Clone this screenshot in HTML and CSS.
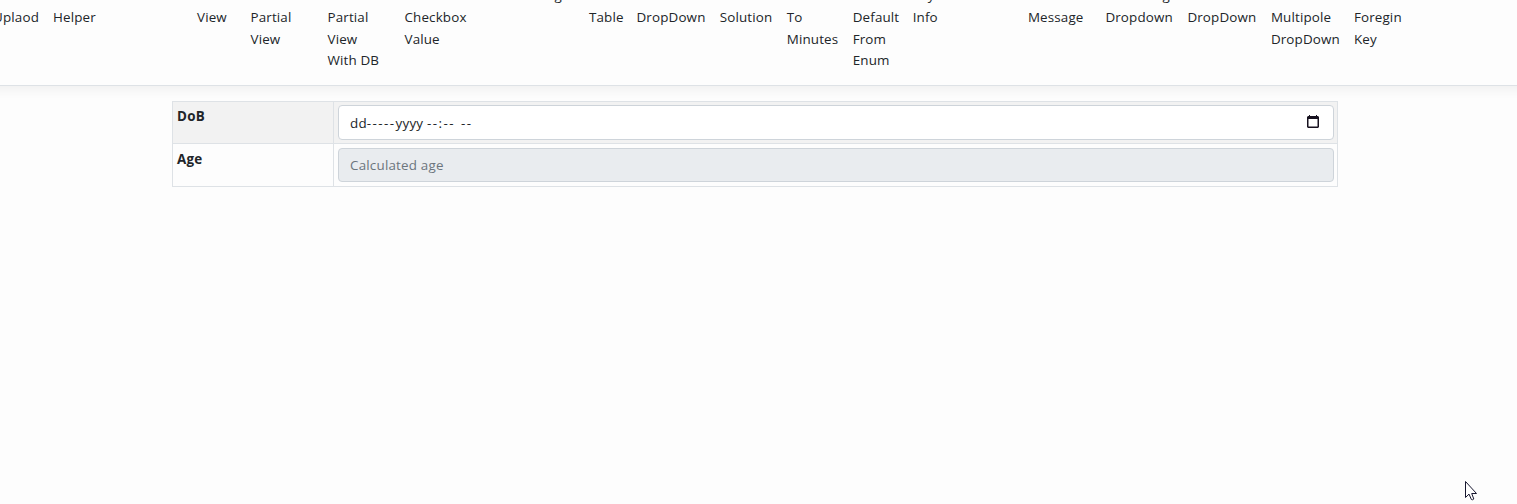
FILE: index.html
```
<!DOCTYPE html>
<html lang="en">
<head>
<meta charset="utf-8">
<title>Age calculator</title>
<link rel="stylesheet" href="styles.css">
</head>
<body>
<header class="navbar">
<nav class="nav-list">
<a class="nav-item nav-clipped"><br><span>Uplaod</span></a>
<a class="nav-item"><br>Helper</a>
<a class="nav-item"><br>View</a>
<a class="nav-item"><br>Partial<br>View</a>
<a class="nav-item"><br>Partial<br>View<br>With DB</a>
<a class="nav-item"><br>Checkbox<br>Value</a>
<a class="nav-item">g</a>
<a class="nav-item"><br>Table</a>
<a class="nav-item"><br>DropDown</a>
<a class="nav-item"><br>Solution</a>
<a class="nav-item"><br>To<br>Minutes</a>
<a class="nav-item"><br>Default<br>From<br>Enum</a>
<a class="nav-item"><span class="tail-info">y</span><br>Info</a>
<a class="nav-item"><br>Message</a>
<a class="nav-item"><span class="tail-dropdown">g</span><br>Dropdown</a>
<a class="nav-item"><br>DropDown</a>
<a class="nav-item"><br>Multipole<br>DropDown</a>
<a class="nav-item"><br>Foregin<br>Key</a>
</nav>
</header>
<main class="container">
<table class="form-table">
<tr class="striped">
<th>DoB</th>
<td><div class="control date-control"><span class="date-text">dd<span class="dashes">-----</span>yyyy <span class="dashes time">--:--</span> <span class="dashes meridiem">--</span></span>
<svg class="calendar" width="14" height="14" viewBox="0 0 14 14"><path d="M3 0h1v1h6V0h1v1h1l1 1v10l-1 1H2l-1-1V2l1-1h1zM2.5 4v7.5h9V4z" fill="#17111f" fill-rule="evenodd"/></svg></div></td>
</tr>
<tr class="age-row">
<th>Age</th>
<td><div class="control disabled"><span class="placeholder">Calculated age</span></div></td>
</tr>
</table>
</main>
<svg class="cursor" width="14" height="21" viewBox="0 0 14 21"><path d="M.5 .5v16l3.5-3.4 2.4 5.4q1 .8 2.4-.5L6.7 12.5h4.8z" fill="#fff" stroke="#17172f"/></svg>
</body>
</html>
```
FILE: styles.css
```
* { box-sizing: border-box; }
body {
  margin: 0;
  height: 504px;
  overflow: hidden;
  background: #fdfdfd;
  color: #212529;
  font: 13.4px/21.6px "Open Sans", "Noto Sans", sans-serif;
}
.navbar {
  height: 86px;
  margin: 0 -20px;
  padding: 0 20px;
  border-bottom: 1px solid #dee2e6;
  box-shadow: 0 4px 11px rgba(0, 0, 0, .055);
  overflow: hidden;
}
.nav-list {
  display: grid;
  grid-template-columns: 53px 144px 53.5px 77px 77px 150px 34.5px 47.5px 83.2px 67px 66px 60px 115.2px 77.5px 82px 83.5px 83px 70px;
  margin-top: -14.7px;
}
.nav-item { white-space: nowrap; letter-spacing: .15px; }
.nav-clipped { text-align: right; padding-right: 14px; direction: rtl; }
.nav-clipped span { direction: ltr; unicode-bidi: isolate; }
.tail-info { margin-left: 15px; }
.tail-dropdown { margin-left: 57px; }
.container { width: 1166px; margin: 15px 0 0 172px; }
.form-table {
  width: 1166px;
  border-collapse: collapse;
  table-layout: fixed;
}
.form-table th, .form-table td {
  height: 42px;
  border: 1px solid #dee2e6;
  padding: 3px 3px 3px 4px;
  vertical-align: top;
  text-align: left;
}
.form-table th { width: 161px; padding-top: 4px; font-weight: 700; letter-spacing: .25px; }
.form-table .age-row td { height: 43px; padding-top: 4px; padding-bottom: 4px; }
.form-table .age-row th { padding-top: 5px; }
.striped { background: #f2f2f2; }
.control {
  display: flex;
  align-items: center;
  justify-content: space-between;
  height: 34px;
  border: 1px solid #ced4da;
  border-radius: 4px;
  padding: 0 13px 0 11px;
  background: #fff;
  letter-spacing: .2px;
}
.date-control { height: 35px; }
.date-text { padding-top: 3px; }
.control.disabled { background: #e9ecef; }
.placeholder { color: #6c757d; padding-top: 2px; }
.dashes { letter-spacing: 1.45px; }
.meridiem { margin-left: 2.5px; }
.calendar { margin-top: -1px; }
.cursor { position: absolute; left: 1465px; top: 481px; }
```
